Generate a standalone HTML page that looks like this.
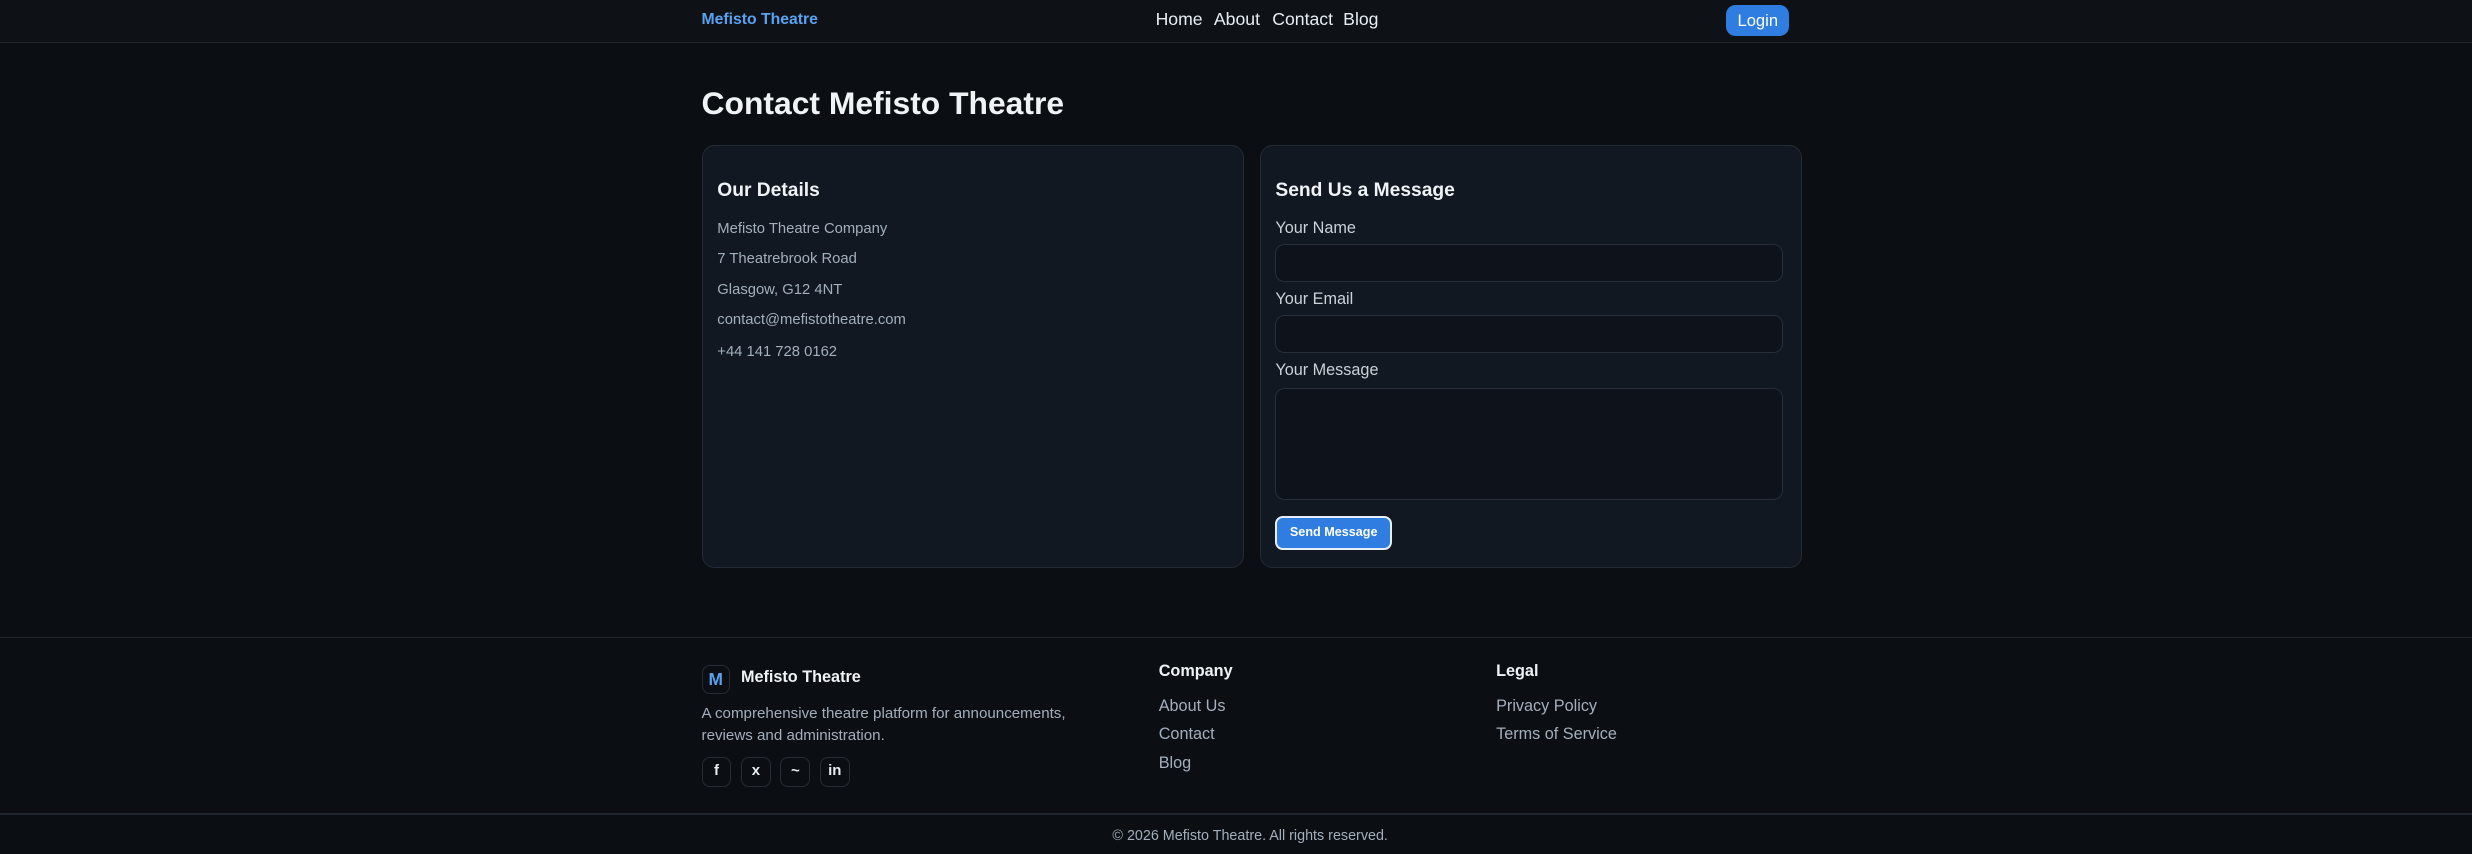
<!DOCTYPE html>
<html><head><meta charset="utf-8"><style>
html{zoom:1.5765}
*{box-sizing:border-box;margin:0;padding:0}
body{width:1568px;height:542px;background:#0b0e12;font-family:"Liberation Sans",Arial,sans-serif;color:#e6edf3;position:relative;overflow:hidden}
.a{position:absolute;white-space:nowrap}
nav{position:absolute;left:0;top:0;width:1568px;height:27px;background:#0e1217;border-bottom:1px solid #1f252d}
.brand{left:445px;top:7px;font-size:10px;font-weight:bold;color:#5aa2f0}
.nl{top:6px;font-size:11.2px;color:#e6edf3}
.login{left:1095px;top:3px;width:40px;height:20px;background:#2f7de0;border-radius:6px;color:#fff;font-size:10.5px;text-align:center;line-height:20px}
h1{position:absolute;left:445px;top:54px;font-size:20.2px;font-weight:bold;color:#f0f3f6}
.card{position:absolute;top:92px;height:268px;width:344px;background:#111821;border:1px solid #232b36;border-radius:8px}
.h{font-size:12.2px;font-weight:bold;color:#f0f3f6}
.d{font-size:9.4px;color:#a3afbd}
.lbl{font-size:10.3px;color:#c9d1d9}
.in{position:absolute;left:809px;width:322px;background:#0e121a;border:1px solid #262f3b;border-radius:6px}
.btn{left:809px;top:327px;width:74px;height:22px;background:#2f7de0;border:1.5px solid #e8eef5;border-radius:5px;color:#fff;font-size:8px;font-weight:bold;text-align:center;line-height:19px}
.hr{position:absolute;left:0;width:1568px;height:1px;background:#20262e}
.soc{position:absolute;top:480px;width:19px;height:19px;border:1px solid #252c36;border-radius:5px;font-size:9.5px;font-weight:bold;color:#e6edf3;text-align:center;line-height:17px}
.fh{font-size:10.3px;font-weight:bold;color:#f0f3f6}
.fl{font-size:10.3px;color:#a3afbd}
</style></head><body>
<nav></nav>
<div class="a brand">Mefisto Theatre</div>
<div class="a nl" style="left:733px">Home</div>
<div class="a nl" style="left:770px">About</div>
<div class="a nl" style="left:807px">Contact</div>
<div class="a nl" style="left:852px">Blog</div>
<div class="a login">Login</div>
<h1>Contact Mefisto Theatre</h1>
<div class="card" style="left:445px"></div>
<div class="card" style="left:799px"></div>
<div class="a h" style="left:455px;top:114px">Our Details</div>
<div class="a d" style="left:455px;top:140px">Mefisto Theatre Company</div>
<div class="a d" style="left:455px;top:159px">7 Theatrebrook Road</div>
<div class="a d" style="left:455px;top:179px">Glasgow, G12 4NT</div>
<div class="a d" style="left:455px;top:198px">contact@mefistotheatre.com</div>
<div class="a d" style="left:455px;top:218px">+44 141 728 0162</div>
<div class="a h" style="left:809px;top:114px">Send Us a Message</div>
<div class="a lbl" style="left:809px;top:139px">Your Name</div>
<div class="in" style="top:155px;height:24px"></div>
<div class="a lbl" style="left:809px;top:184px">Your Email</div>
<div class="in" style="top:200px;height:24px"></div>
<div class="a lbl" style="left:809px;top:229px">Your Message</div>
<div class="in" style="top:246px;height:71px"></div>
<div class="a btn">Send Message</div>
<div class="hr" style="top:404px"></div>
<div class="a" style="left:445px;top:422px;width:18px;height:18px;border:1px solid #252c36;border-radius:5px;color:#5aa2f0;font-weight:bold;font-size:11px;text-align:center;line-height:17px">M</div>
<div class="a fh" style="left:470px;top:424px">Mefisto Theatre</div>
<div class="a d" style="left:445px;top:446px;font-size:9.6px;line-height:14px;white-space:normal;width:250px">A comprehensive theatre platform for announcements, reviews and administration.</div>
<div class="soc" style="left:445px">f</div>
<div class="soc" style="left:470px">x</div>
<div class="soc" style="left:495px">~</div>
<div class="soc" style="left:520px">in</div>
<div class="a fh" style="left:735px;top:420px">Company</div>
<div class="a fl" style="left:735px;top:442px">About Us</div>
<div class="a fl" style="left:735px;top:460px">Contact</div>
<div class="a fl" style="left:735px;top:478px">Blog</div>
<div class="a fh" style="left:949px;top:420px">Legal</div>
<div class="a fl" style="left:949px;top:442px">Privacy Policy</div>
<div class="a fl" style="left:949px;top:460px">Terms of Service</div>
<div class="hr" style="top:516px"></div>
<div class="a d" style="left:0;width:1586px;text-align:center;top:525px;font-size:9.1px">© 2026 Mefisto Theatre. All rights reserved.</div>
</body></html>
